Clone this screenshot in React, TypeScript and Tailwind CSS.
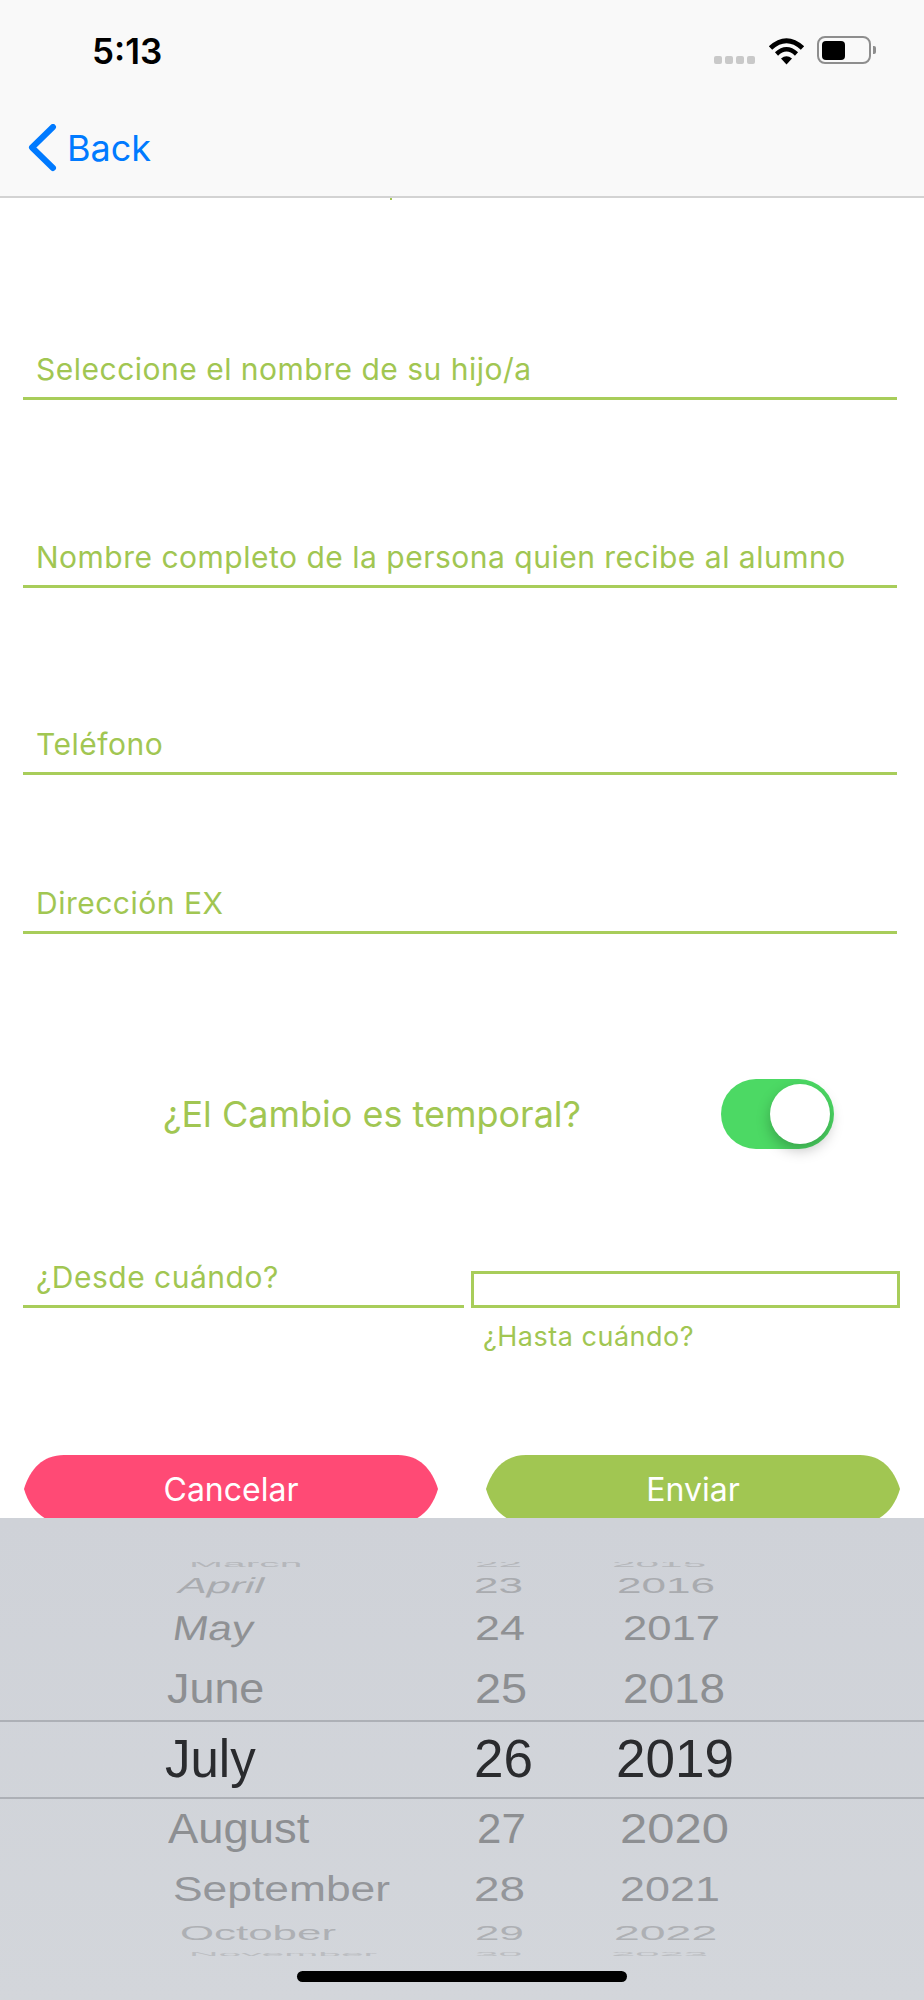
const labelFont = "font-['Inter',sans-serif] text-[#a1c652]";

// picker rows go from the top of the wheel to the bottom, scaled to fake the cylinder
const wheelRows = [
  { month: 'March', day: '22', year: '2015', row: 'h-[4px] text-[#b5b7bb]', monthCls: 'ml-[189px] scale-x-[.8] scale-y-[.16]', dayCls: 'ml-[13px] scale-x-[.83] scale-y-[.16]', yearCls: 'ml-[14px] scale-x-[.83] scale-y-[.16]' },
  { month: 'April', day: '23', year: '2016', row: 'h-[38px] text-[#a9abaf]', monthCls: 'ml-[179px] scale-x-[.84] scale-y-[.43] -skew-x-[12deg]', dayCls: 'ml-[12px] scale-x-[.865] scale-y-[.43]', yearCls: 'ml-[19px] scale-x-[.865] scale-y-[.43]' },
  { month: 'May', day: '24', year: '2017', row: 'h-[48px] text-[#8f9194]', monthCls: 'ml-[173px] scale-x-[.84] scale-y-[.68] -skew-x-[7deg]', dayCls: 'ml-[13px] scale-x-[.88] scale-y-[.68]', yearCls: 'ml-[25px] scale-x-[.855] scale-y-[.68]' },
  { month: 'June', day: '25', year: '2018', row: 'h-[72px] text-[#8d8f92]', monthCls: 'ml-[167px] scale-x-[.88] scale-y-[.84]', dayCls: 'ml-[13px] scale-x-[.92] scale-y-[.84]', yearCls: 'ml-[25px] scale-x-[.9] scale-y-[.84]' },
  { month: 'July', day: '26', year: '2019', row: 'h-[68px] text-[#2a2b2e]', monthCls: 'ml-[165px] scale-y-[1.04]', dayCls: 'ml-[12px] scale-x-[1.04] scale-y-[1.04]', yearCls: 'ml-[18px] scale-x-[1.04] scale-y-[1.04]' },
  { month: 'August', day: '27', year: '2020', row: 'h-[72px] text-[#8d8f92]', monthCls: 'ml-[168px] scale-x-[.89] scale-y-[.84]', dayCls: 'ml-[15px] scale-x-[.86] scale-y-[.84]', yearCls: 'ml-[22px] scale-x-[.96] scale-y-[.84]' },
  { month: 'September', day: '28', year: '2021', row: 'h-[50px] text-[#94969a]', monthCls: 'ml-[173px] scale-x-[.87] scale-y-[.68]', dayCls: 'ml-[12px] scale-x-[.9] scale-y-[.68]', yearCls: 'ml-[22px] scale-x-[.88] scale-y-[.68]' },
  { month: 'October', day: '29', year: '2022', row: 'h-[36px] text-[#aeb0b4]', monthCls: 'ml-[180px] scale-x-[.86] scale-y-[.41]', dayCls: 'ml-[13px] scale-x-[.86] scale-y-[.41]', yearCls: 'ml-[16px] scale-x-[.91] scale-y-[.41]' },
  { month: 'November', day: '30', year: '2023', row: 'h-[6px] text-[#bbbdc1]', monthCls: 'ml-[189px] scale-x-[.8] scale-y-[.12]', dayCls: 'ml-[13px] scale-x-[.83] scale-y-[.12]', yearCls: 'ml-[13px] scale-x-[.855] scale-y-[.12]' },
];

function StatusBar() {
  return (
    <div className="h-[100px] flex items-start justify-between">
      <span className="ml-[92px] mt-[31px] font-['Inter',sans-serif] font-semibold text-[35px] leading-[40px] text-black">5:13</span>
      <div className="flex items-start mt-[36px] mr-[48px]">
        <div className="flex gap-[3px] mt-[20px]">
          <span className="w-[8px] h-[8px] rounded-[2px] bg-[#c9c9c9]" />
          <span className="w-[8px] h-[8px] rounded-[2px] bg-[#c9c9c9]" />
          <span className="w-[8px] h-[8px] rounded-[2px] bg-[#c9c9c9]" />
          <span className="w-[8px] h-[8px] rounded-[2px] bg-[#c9c9c9]" />
        </div>
        <svg className="ml-[13px] mt-[1px]" width="37" height="28" viewBox="0 0 37 28">
          <path d="M2.5 11 Q18.5 -3.5 34.5 11" fill="none" stroke="#000" strokeWidth="5" />
          <path d="M8.5 17 Q18.5 7.5 28.5 17" fill="none" stroke="#000" strokeWidth="4.5" />
          <path d="M13 21.5 Q18.5 17 24 21.5 L18.5 27.5 Z" fill="#000" />
        </svg>
        <div className="ml-[12px] w-[54px] h-[28px] rounded-[8px] border-[2.5px] border-[#8e8e8e] p-[2.5px]">
          <div className="w-[23px] h-full rounded-[4px] bg-black" />
        </div>
        <span className="ml-[2px] mt-[10px] w-[3px] h-[8px] rounded-r-[2px] bg-[#8e8e8e]" />
      </div>
    </div>
  );
}

function NavBar() {
  return (
    <div className="flex items-start">
      <svg className="ml-[28px] mt-[24px]" width="30" height="48" viewBox="0 0 30 48">
        <path d="M25 3 L4 23.5 L25 44" fill="none" stroke="#007aff" strokeWidth="6" strokeLinecap="round" strokeLinejoin="round" />
      </svg>
      <span className="ml-[9px] mt-[28px] font-['Inter',sans-serif] text-[36px] leading-[40px] text-[#007aff]">Back</span>
    </div>
  );
}

function Field({ label, className }: { label: string; className: string }) {
  return (
    <div className={`mx-[23px] w-[874px] h-[53px] border-b-[3px] border-[#a8cd5a] flex items-center pl-[13px] pb-[7px] text-[30px] tracking-[0.5px] leading-[36px] ${labelFont} ${className}`}>
      {label}
    </div>
  );
}

function Picker() {
  return (
    <div className="relative h-[482px] bg-linear-to-b from-[#cfd2d8] to-[#d3d6db] pt-[44px]">
      <div className="h-[394px] overflow-hidden font-['Liberation_Sans',sans-serif] text-[51px] leading-none">
        {wheelRows.map((r) => (
          <div key={r.month} className={`flex items-center ${r.row}`}>
            <div className="w-[462px] shrink-0">
              <span className={`inline-block origin-left ${r.monthCls}`}>{r.month}</span>
            </div>
            <div className="w-[136px] shrink-0">
              <span className={`inline-block origin-left ${r.dayCls}`}>{r.day}</span>
            </div>
            <div className="w-[140px] shrink-0">
              <span className={`inline-block origin-left ${r.yearCls}`}>{r.year}</span>
            </div>
          </div>
        ))}
      </div>
      {/* selection lines over the wheel */}
      <div className="absolute left-0 right-0 top-[202px] h-[79px] border-y-2 border-[#adb0b6]" />
      <div className="mx-auto mt-[15px] w-[330px] h-[11px] rounded-full bg-black" />
    </div>
  );
}

export default function App() {
  return (
    <div className="w-[924px] h-[2000px] bg-white overflow-hidden">
      <div className="h-[198px] bg-[#f9f9f9] border-b-2 border-[#d3d3d3]">
        <StatusBar />
        <NavBar />
      </div>

      <div className="h-[1320px] overflow-hidden">
        <div className="ml-[390px] w-[2px] h-[2px] bg-[#a1c652]" />
        <Field label="Seleccione el nombre de su hijo/a" className="mt-[147px]" />
        <Field label="Nombre completo de la persona quien recibe al alumno" className="mt-[135px]" />
        <Field label="Teléfono" className="mt-[134px]" />
        <Field label="Dirección EX" className="mt-[106px]" />

        <div className="mt-[145px] h-[70px] flex items-center justify-between pl-[163px] pr-[90px]">
          <span className={`text-[36px] leading-[44px] ${labelFont}`}>¿El Cambio es temporal?</span>
          <div className="w-[113px] h-[70px] rounded-full bg-[#4cd964] flex items-center justify-end pr-[4px]">
            <div className="w-[60px] h-[60px] rounded-full bg-white shadow-[0_6px_14px_rgba(0,0,0,0.25)]" />
          </div>
        </div>

        <div className="mt-[122px] flex">
          <div className="ml-[23px] w-[441px] h-[37px] border-b-[3px] border-[#a8cd5a] pl-[13px]">
            <span className={`block -mt-[12px] text-[30px] tracking-[0.5px] leading-[36px] ${labelFont}`}>¿Desde cuándo?</span>
          </div>
          <div className="ml-[7px]">
            <div className="w-[429px] h-[37px] border-[3px] border-[#a8cd5a]" />
            <p className={`mt-[14px] ml-[12px] text-[27px] tracking-[0.5px] leading-[30px] ${labelFont}`}>¿Hasta cuándo?</p>
          </div>
        </div>

        {/* pointed sides like the original buttons, border-radius can't do it */}
        <div className="mt-[103px] flex justify-between px-[24px]">
          <button className="w-[414px] h-[68px] pt-[2px] [clip-path:path('M40_0H374C395_0_408_14_414_34C408_54_395_68_374_68H40C19_68_6_54_0_34C6_14_19_0_40_0Z')] bg-[#ff4a75] text-white font-['Inter',sans-serif] text-[32px]">Cancelar</button>
          <button className="w-[414px] h-[68px] pt-[2px] [clip-path:path('M40_0H374C395_0_408_14_414_34C408_54_395_68_374_68H40C19_68_6_54_0_34C6_14_19_0_40_0Z')] bg-[#a1c652] text-white font-['Inter',sans-serif] text-[32px]">Enviar</button>
        </div>
      </div>

      <Picker />
    </div>
  );
}
